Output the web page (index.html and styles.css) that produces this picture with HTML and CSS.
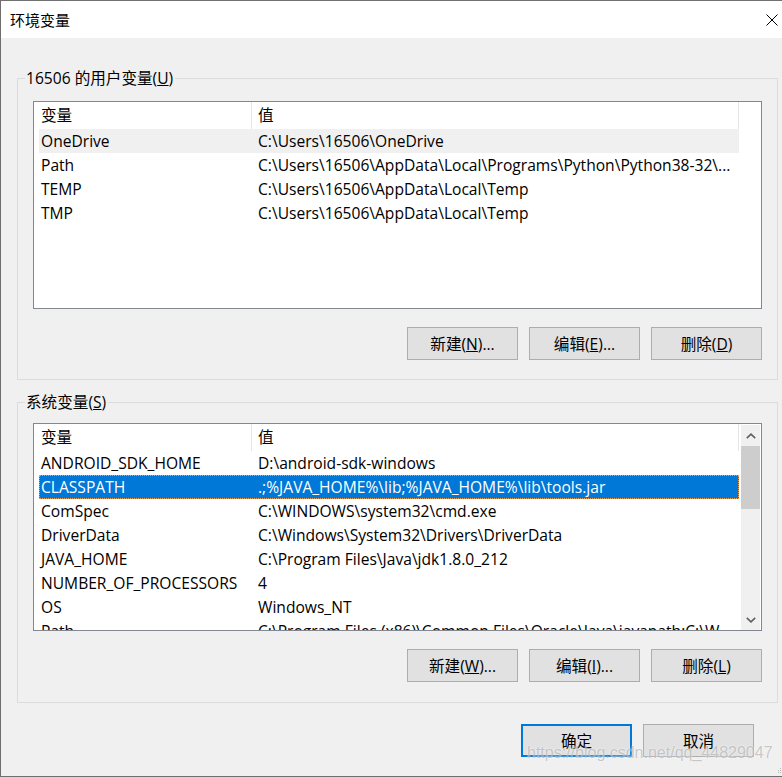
FILE: index.html
```html
<!DOCTYPE html>
<html lang="zh-CN">
<head>
<meta charset="utf-8">
<title>环境变量</title>
<link rel="stylesheet" href="styles.css">
</head>
<body>
<div class="window">
  <div class="titlebar">
    <span class="title">环境变量</span>
    <svg class="close" width="12" height="12" viewBox="0 0 12 12"><path d="M0.5 0.5 L11.5 11.5 M11.5 0.5 L0.5 11.5" stroke="#000" stroke-width="1" fill="none"/></svg>
  </div>
  <div class="content">
    <fieldset class="group">
      <legend>16506 的用户变量(<u>U</u>)</legend>
      <div class="group-body group-body--user">
        <div class="list">
          <div class="list-inner">
            <div class="row header"><div class="c1">变量</div><div class="c2">值</div></div>
            <div class="row hot"><div class="c1">OneDrive</div><div class="c2">C:\Users\16506\OneDrive</div></div>
            <div class="row"><div class="c1">Path</div><div class="c2">C:\Users\16506\AppData\Local\Programs\Python\Python38-32\...</div></div>
            <div class="row"><div class="c1">TEMP</div><div class="c2">C:\Users\16506\AppData\Local\Temp</div></div>
            <div class="row"><div class="c1">TMP</div><div class="c2">C:\Users\16506\AppData\Local\Temp</div></div>
          </div>
        </div>
        <div class="btnrow">
          <button class="btn">新建(<u>N</u>)...</button>
          <button class="btn">编辑(<u>E</u>)...</button>
          <button class="btn">删除(<u>D</u>)</button>
        </div>
      </div>
    </fieldset>
    <fieldset class="group group--sys">
      <legend>系统变量(<u>S</u>)</legend>
      <div class="group-body group-body--sys">
        <div class="list">
          <div class="list-inner">
            <div class="row header"><div class="c1">变量</div><div class="c2">值</div></div>
            <div class="row"><div class="c1">ANDROID_SDK_HOME</div><div class="c2">D:\android-sdk-windows</div></div>
            <div class="row selected"><div class="c1">CLASSPATH</div><div class="c2">.;%JAVA_HOME%\lib;%JAVA_HOME%\lib\tools.jar</div></div>
            <div class="row"><div class="c1">ComSpec</div><div class="c2">C:\WINDOWS\system32\cmd.exe</div></div>
            <div class="row"><div class="c1">DriverData</div><div class="c2">C:\Windows\System32\Drivers\DriverData</div></div>
            <div class="row"><div class="c1">JAVA_HOME</div><div class="c2">C:\Program Files\Java\jdk1.8.0_212</div></div>
            <div class="row"><div class="c1">NUMBER_OF_PROCESSORS</div><div class="c2">4</div></div>
            <div class="row"><div class="c1">OS</div><div class="c2">Windows_NT</div></div>
            <div class="row"><div class="c1">Path</div><div class="c2">C:\Program Files (x86)\Common Files\Oracle\Java\javapath;C:\W...</div></div>
          </div>
          <div class="scrollbar">
            <div class="sb-arrow">
              <svg width="10" height="6" viewBox="0 0 10 6"><polyline points="0.8,5.2 5,1.2 9.2,5.2" fill="none" stroke="#606060" stroke-width="1.6"/></svg>
            </div>
            <div class="sb-thumb"></div>
            <div class="sb-track"></div>
            <div class="sb-arrow">
              <svg width="10" height="6" viewBox="0 0 10 6"><polyline points="0.8,0.8 5,4.8 9.2,0.8" fill="none" stroke="#606060" stroke-width="1.6"/></svg>
            </div>
          </div>
        </div>
        <div class="btnrow">
          <button class="btn">新建(<u>W</u>)...</button>
          <button class="btn">编辑(<u>I</u>)...</button>
          <button class="btn">删除(<u>L</u>)</button>
        </div>
      </div>
    </fieldset>
    <div class="dialog-buttons">
      <button class="btn btn--default">确定</button>
      <button class="btn">取消</button>
    </div>
  </div>
  <div class="watermark">https://blog.csdn.net/qq_44829047</div>
  <svg class="grip" width="5" height="6" viewBox="0 0 5 6"><rect x="3" y="0" width="1" height="1" fill="#b5b5b5"/><rect x="1" y="2" width="1" height="1" fill="#b5b5b5"/><rect x="3" y="2" width="1" height="1" fill="#b5b5b5"/><rect x="1" y="4" width="1" height="1" fill="#b5b5b5"/><rect x="3" y="4" width="1" height="1" fill="#b5b5b5"/></svg>
</div>
</body>
</html>
```
FILE: styles.css
```css
* { box-sizing: border-box; }
html, body { margin: 0; padding: 0; }
body {
  width: 782px;
  height: 777px;
  overflow: hidden;
  background: #f0f0f0;
  font-family: "Open Sans", "Noto Sans CJK SC", sans-serif;
  font-size: 15.6px;
  color: #000;
}
.window {
  position: relative;
  width: 782px;
  height: 777px;
  background: #f0f0f0;
  border-top: 1px solid #717171;
  border-left: 1px solid #6e6e6e;
  border-bottom: 1px solid #6e6e6e;
  display: flex;
  flex-direction: column;
}
.titlebar {
  height: 37px;
  flex: none;
  background: #fff;
  display: flex;
  align-items: center;
  justify-content: space-between;
  padding: 0 4px 0 9px;
}
.title {
  font-family: "Noto Sans CJK SC", sans-serif;
  font-size: 15px;
  line-height: 20px;
}
.close { display: block; margin-top: 1px; }
.content {
  flex: 1;
  padding: 0 4px 0 16px;
  display: flex;
  flex-direction: column;
}
.group {
  margin: 30px 0 0 0;
  padding: 0;
  border: 1px solid #dcdcdc;
  min-width: 0;
}
.group--sys { margin-top: 12px; }
.group legend {
  margin-left: 7px;
  padding: 0 2px 0 1px;
  font-size: 15.6px;
  line-height: 20px;
}
.group-body { padding: 13px 15px 19px 15px; }
.group-body--sys { padding-top: 11px; padding-bottom: 20px; }
.list {
  height: 208px;
  border: 1px solid #828790;
  background: #fff;
  display: flex;
  overflow: hidden;
}
.list-inner {
  width: 700px;
  margin-left: 5px;
  flex: none;
}
.row {
  display: flex;
  height: 24px;
  line-height: 24px;
  white-space: nowrap;
}
.row .c1 {
  width: 213px;
  padding-left: 2px;
  overflow: hidden;
  flex: none;
}
.row .c2 {
  width: 487px;
  padding-left: 6px;
  overflow: hidden;
  flex: none;
}
.row.header { height: 27px; line-height: 27px; }
.row.header .c1 { border-right: 1px solid #e5e5e5; }
.row.header .c2 { border-right: 1px solid #e5e5e5; }
.row.hot { background: #f0f0f0; }
.row.selected {
  background: #0078d7;
  color: #fff;
  outline: 1px dotted #e8a060;
  outline-offset: -1px;
}
.scrollbar {
  width: 19px;
  margin: 1px 1px 0 auto;
  background: #f0f0f0;
  display: flex;
  flex-direction: column;
  flex: none;
}
.sb-arrow {
  height: 21px;
  display: flex;
  align-items: center;
  justify-content: center;
  flex: none;
}
.sb-thumb { height: 63px; background: #cdcdcd; flex: none; }
.sb-track { flex: 1; }
.btnrow {
  display: flex;
  justify-content: flex-end;
  gap: 11px;
  margin-top: 18px;
}
.btn {
  width: 111px;
  height: 33px;
  padding: 0;
  margin: 0;
  background: #e1e1e1;
  border: 1px solid #adadad;
  font-family: "Open Sans", "Noto Sans CJK SC", sans-serif;
  font-size: 15.6px;
  color: #000;
  line-height: 20px;
}
.btn--default { border: 2px solid #0078d7; }
.dialog-buttons {
  display: flex;
  justify-content: flex-end;
  gap: 11px;
  margin-top: 21px;
  padding-right: 24px;
}
.watermark {
  position: absolute;
  left: 526px;
  top: 743px;
  font-family: "Liberation Sans", Arial, sans-serif;
  font-size: 16px;
  color: rgba(150, 150, 150, 0.5);
  text-shadow: 0 0 2px rgba(255, 255, 255, 0.95);
  white-space: nowrap;
}
.grip {
  position: absolute;
  right: 0;
  bottom: 2px;
}
```
